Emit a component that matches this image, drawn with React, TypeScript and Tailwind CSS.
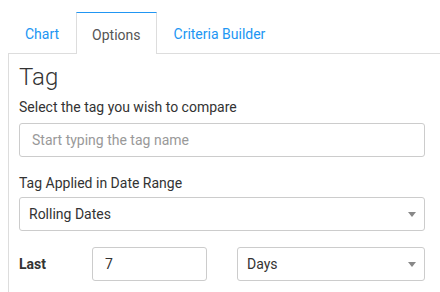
import { useState } from 'react';

function Caret() {
  return (
    <svg width="8" height="5" viewBox="0 0 8 5" className="shrink-0">
      <path d="M0 0 L8 0 L4 5 Z" fill="#888" />
    </svg>
  );
}

export default function App() {
  const [tab, setTab] = useState('Options');
  const [tag, setTag] = useState('');
  const [last, setLast] = useState('7');

  const tabs = ['Chart', 'Options', 'Criteria Builder'];

  return (
    <div className="h-[292px] w-[440px] overflow-hidden bg-white pt-[12px] pl-[8px] font-['Roboto',sans-serif] text-[14px] text-[#333]">
      {/* Abas */}
      <div className="flex h-[42px] border-b border-[#ddd]">
        {tabs.map((t) =>
          t === tab ? (
            <button
              key={t}
              onClick={() => setTab(t)}
              className="relative -mb-px h-[42px] border border-b-0 border-[#ddd] border-t-[#2196f3] bg-white px-[15px] pt-[3px] text-[#555]"
            >
              {t}
            </button>
          ) : (
            <button
              key={t}
              onClick={() => setTab(t)}
              className="h-[41px] border border-transparent px-[16px] pt-[3px] text-[#2196f3]"
            >
              {t}
            </button>
          )
        )}
      </div>

      {/* Painel */}
      <div className="h-[240px] border-l border-[#ddd] pl-[10px] pr-[15px]">
        <h2 className="pt-[8px] text-[24px] font-light leading-[30px] text-[#333]">Tag</h2>

        <p className="mt-[5px] leading-[20px]">Select the tag you wish to compare</p>

        <input
          value={tag}
          onChange={(e) => setTag(e.target.value)}
          placeholder="Start typing the tag name"
          className="mt-[6px] h-[34px] w-full rounded-[3px] border border-[#ccc] px-[12px] text-[14px] text-[#333] outline-none placeholder:text-[#999]"
        />

        <p className="mt-[16px] leading-[20px]">Tag Applied in Date Range</p>

        <div className="mt-[4px] flex h-[34px] items-center justify-between rounded-[3px] border border-[#ccc] pl-[9px] pr-[8px]">
          <span>Rolling Dates</span>
          <Caret />
        </div>

        <div className="mt-[16px] flex items-center">
          <span className="w-[73px] font-bold">Last</span>
          <input
            value={last}
            onChange={(e) => setLast(e.target.value)}
            className="h-[34px] w-[115px] rounded-[3px] border border-[#ccc] px-[12px] text-[14px] text-[#333] outline-none"
          />
          <div className="ml-[30px] flex h-[34px] flex-1 items-center justify-between rounded-[3px] border border-[#ccc] pl-[9px] pr-[8px]">
            <span>Days</span>
            <Caret />
          </div>
        </div>
      </div>
    </div>
  );
}
